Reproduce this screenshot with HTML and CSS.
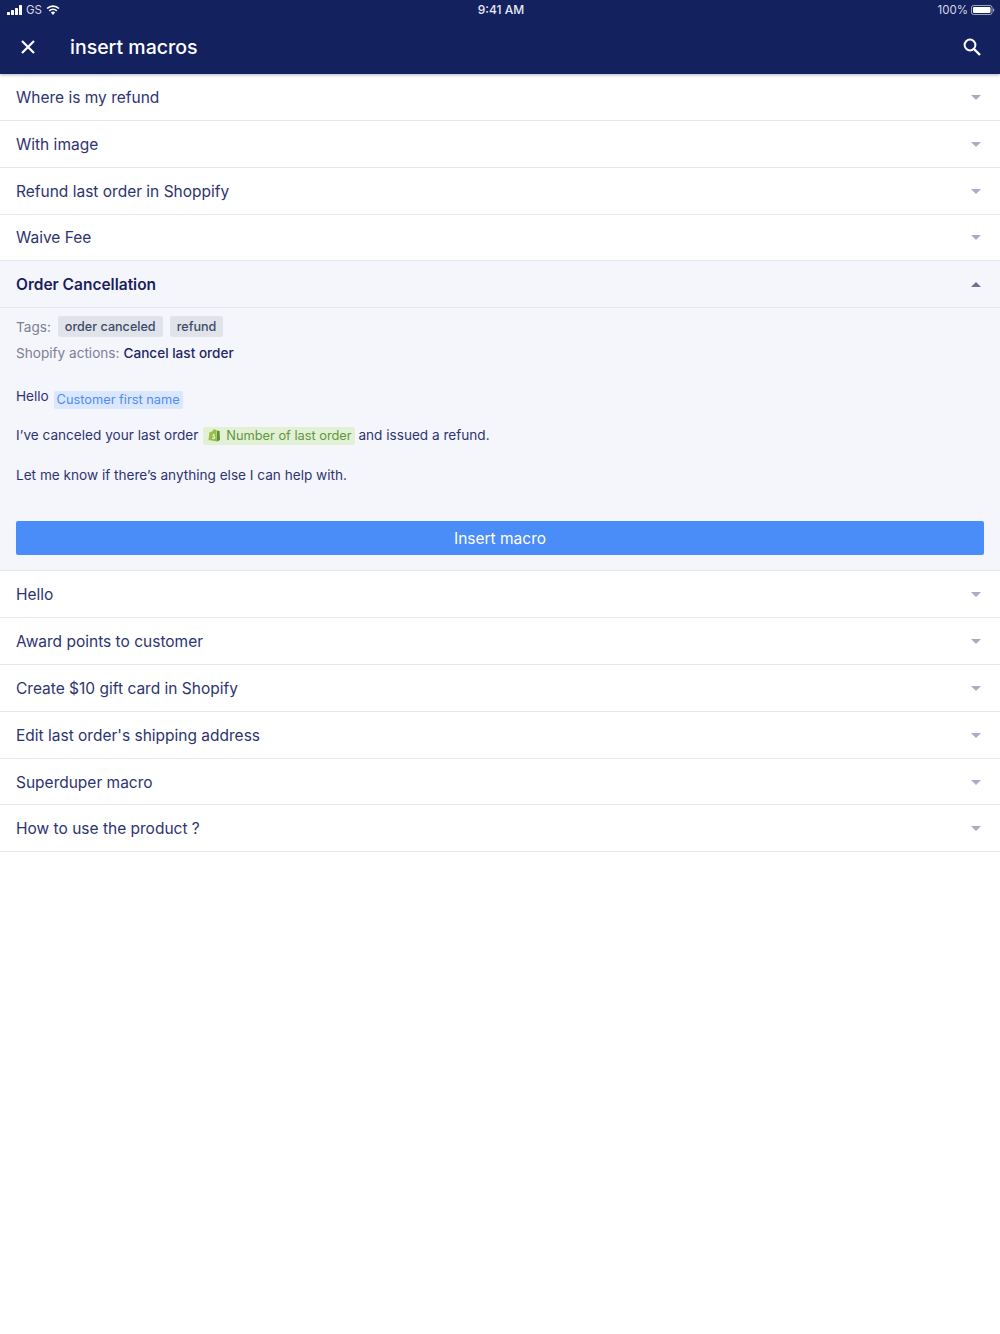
FILE: index.html
```html
<!DOCTYPE html>
<html lang="en">
<head>
  <meta charset="UTF-8" />
  <title>insert macros</title>
  <link rel="stylesheet" href="styles.css">
</head>
<body>
  <header class="top">
    <div class="status">
      <div class="status-left">
        <svg width="15" height="10" viewBox="0 0 15 10"><rect x="0" y="7" width="3" height="3" rx=".5"/><rect x="4" y="5" width="3" height="5" rx=".5"/><rect x="8" y="3" width="3" height="7" rx=".5"/><rect x="12" y="0" width="3" height="10" rx=".5"/></svg>
        <span>GS</span>
        <svg width="14" height="10" viewBox="0 0 14 10"><path d="M7 10 4.900 7.600a3 3 0 0 1 4.200 0z"/><path d="M3.800 6.400 2.700 5.200a6.200 6.200 0 0 1 8.600 0l-1.100 1.200a4.600 4.600 0 0 0-6.400 0z"/><path d="M1.700 4.100.5 2.900a9.400 9.400 0 0 1 13 0l-1.200 1.200a7.700 7.700 0 0 0-10.600 0z"/></svg>
      </div>
      <div class="status-time">9:41 AM</div>
      <div class="status-right">
        <span>100%</span>
        <svg width="24" height="10" viewBox="0 0 24 10"><rect x=".5" y=".5" width="20.500" height="9" rx="2" fill="none" stroke="#fff" stroke-opacity=".6"/><rect x="2" y="2" width="17.500" height="6" rx="1"/><rect x="22" y="3.500" width="1.200" height="3" rx=".5" fill-opacity=".6"/></svg>
      </div>
    </div>
    <div class="titlebar">
      <svg class="close-icon" width="16" height="16" viewBox="0 0 16 16"><path d="M2 2l12 12M14 2 2 14" stroke="#fff" stroke-width="2.200" fill="none"/></svg>
      <h1>insert macros</h1>
      <svg class="search-icon" width="20" height="20" viewBox="0 0 20 20"><circle cx="8" cy="8" r="5.400" fill="none" stroke="#fff" stroke-width="2"/><path d="M12 12l6 6" stroke="#fff" stroke-width="2.400" fill="none"/></svg>
    </div>
  </header>

  <ul class="macros">
    <li class="macro"><span>Where is my refund</span><i class="arrow"></i></li>
    <li class="macro"><span>With image</span><i class="arrow"></i></li>
    <li class="macro"><span>Refund last order in Shoppify</span><i class="arrow"></i></li>
    <li class="macro"><span>Waive Fee</span><i class="arrow"></i></li>
    <li class="macro open"><span>Order Cancellation</span><i class="arrow up"></i></li>
    <li class="detail">
      <div class="meta tags-row">
        <span class="label">Tags:</span>
        <span class="tag">order canceled</span>
        <span class="tag">refund</span>
      </div>
      <div class="meta actions-row"><span class="label">Shopify actions:</span> <span class="action">Cancel last order</span></div>
      <p class="line first">Hello <span class="var blue">Customer first name</span></p>
      <p class="line second">I’ve canceled your last order <span class="var green"><svg width="12" height="13" viewBox="0 0 12 13"><path d="M1.500 3.200 4.500 2.200C5 .8 6 .2 7 .4L8.500 1 9 12.500 0.500 11z" fill="#95bf47"/><path d="M9 1.200l.8.600 1.800.3.400 9-3 1.400z" fill="#5e8e3e"/><path d="M6.800 5.200C5.400 4.900 4.400 5.600 4.500 6.500c.1 1 1.900 1 1.800 1.800-.1.600-1 .6-1.900.1l-.3 1.100c1.500.6 3 .2 3.200-1.100.1-1.200-1.700-1.500-1.700-2 0-.4.600-.5 1.300-.2z" fill="#fff"/></svg>Number of last order</span> and issued a refund.</p>
      <p class="line">Let me know if there’s anything else I can help with.</p>
      <button class="insert">Insert macro</button>
    </li>
    <li class="macro"><span>Hello</span><i class="arrow"></i></li>
    <li class="macro"><span>Award points to customer</span><i class="arrow"></i></li>
    <li class="macro"><span>Create $10 gift card in Shopify</span><i class="arrow"></i></li>
    <li class="macro"><span>Edit last order's shipping address</span><i class="arrow"></i></li>
    <li class="macro"><span>Superduper macro</span><i class="arrow"></i></li>
    <li class="macro"><span>How to use the product ?</span><i class="arrow"></i></li>
  </ul>
</body>
</html>
```

FILE: styles.css
```css
* {
  box-sizing: border-box;
}

body {
  margin: 0;
  font-family: Inter, 'Noto Sans', sans-serif;
  background: #fff;
  color: #2d3470;
}

.top {
  background: #14215f;
  color: #fff;
  height: 74px;
  box-shadow: 0 1px 3px rgba(20, 33, 95, 0.35);
  position: relative;
}

.status {
  height: 19px;
  padding: 0 5px 0 7px;
  display: grid;
  grid-template-columns: 1fr auto 1fr;
  align-items: center;
  font-size: 11.5px;
  color: #d5d8e6;
}

.status svg {
  fill: #fff;
  display: block;
}

.status-left {
  display: flex;
  align-items: center;
  gap: 4px;
}

.status-time {
  font-size: 12px;
  font-weight: 500;
  color: #e8eaf2;
}

.status-right {
  display: flex;
  justify-content: flex-end;
  align-items: center;
  gap: 3px;
}

.titlebar {
  height: 55px;
  display: flex;
  align-items: center;
  padding: 0 18px 0 20px;
}

.close-icon {
  margin-right: 34px;
}

.titlebar h1 {
  margin: 0;
  flex: 1;
  font-size: 19.5px;
  font-weight: 500;
}

.macros {
  list-style: none;
  margin: 0;
  padding: 0;
}

.macro {
  height: 46.85px;
  padding: 1px 19px 0 16px;
  display: flex;
  justify-content: space-between;
  align-items: center;
  font-size: 15.5px;
  border-bottom: 1px solid #e4e6ec;
}

.macro.open {
  background: #f5f6fb;
  color: #191f5e;
  font-weight: 600;
}

.arrow {
  width: 0;
  height: 0;
  border-left: 5px solid transparent;
  border-right: 5px solid transparent;
  border-top: 5px solid #a9acc6;
}

.arrow.up {
  border-top: 0;
  border-bottom: 5px solid #6d7091;
}

.detail {
  background: #f5f6fb;
  height: 263px;
  padding: 8px 16px 0;
  border-bottom: 1px solid #e4e6ec;
  font-size: 13.6px;
}

.meta {
  display: flex;
  align-items: center;
  gap: 7px;
}

.tags-row {
  height: 21px;
}

.actions-row {
  gap: 4px;
  margin-top: 5px;
  height: 22px;
}

.label {
  color: #7b8096;
}

.tag {
  background: #e0e3ea;
  color: #3f4a68;
  font-size: 12.6px;
  font-weight: 500;
  padding: 0 7px;
  height: 21px;
  line-height: 21px;
  border-radius: 3px;
}

.action {
  color: #1f2766;
  font-weight: 500;
}

.line {
  margin: 18px 0 0;
  height: 22px;
  line-height: 22px;
}

.line.first {
  margin-top: 21px;
}

.line.second {
  margin-top: 17px;
}

.var {
  display: inline-block;
  height: 18px;
  line-height: 18px;
  font-size: 12.8px;
  padding: 0 3px;
  margin-left: 1px;
  border-radius: 2px;
}

.var.blue {
  background: #dbe7fe;
  color: #4e8df5;
  vertical-align: -3px;
}

.var.green {
  background: #e2f0d6;
  color: #5f9640;
  padding-left: 5px;
}

.var svg {
  vertical-align: -2px;
  margin-right: 6px;
}

.insert {
  display: block;
  width: 100%;
  height: 34px;
  margin-top: 35px;
  background: #4a8df8;
  border: 0;
  border-radius: 2px;
  color: #fff;
  font-family: inherit;
  font-size: 15.5px;
}
```
